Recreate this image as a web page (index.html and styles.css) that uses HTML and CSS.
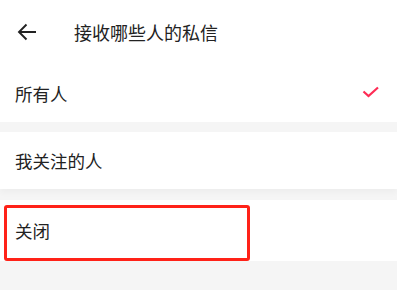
FILE: index.html
```html
<!DOCTYPE html>
<html lang="zh-CN">
<head>
    <meta charset="UTF-8">
    <meta name="viewport" content="width=device-width, initial-scale=1.0">
    <title>接收哪些人的私信</title>
    <link rel="stylesheet" href="styles.css">
</head>
<body>

<header class="topbar">
    <a href="#" class="back">
        <svg width="20" height="20" viewBox="0 0 20 20">
            <path d="M19 10H2M9.5 2.5L2 10l7.5 7.5" fill="none" stroke="#222" stroke-width="1.9"/>
        </svg>
    </a>
    <span class="title">接收哪些人的私信</span>
</header>

<div class="options">
    <div class="option first">
        <span>所有人</span>
        <svg class="check" width="18" height="12" viewBox="0 0 18 12">
            <path d="M1.5 5.5l5 4.5 9.5-8.5" fill="none" stroke="#fe2c55" stroke-width="2.2"/>
        </svg>
    </div>
    <div class="option second">
        <span>我关注的人</span>
    </div>
    <div class="option last">
        <span>关闭</span>
        <div class="highlight"></div>
    </div>
</div>

</body>
</html>
```

FILE: styles.css
```css
body {
    margin: 0;
    padding: 0;
    background-color: #f5f5f5;
    color: #222222;
    font-family: "Liberation Sans", "Noto Sans CJK SC", sans-serif;
    height: 290px;
    overflow: hidden;
}

.topbar {
    height: 64px;
    background-color: #ffffff;
    display: flex;
    align-items: center;
    padding-left: 17px;
}

.back {
    display: flex;
    margin-top: -1px;
}

.title {
    margin-left: 37px;
    font-size: 18px;
    margin-top: -1px;
}

.option {
    background-color: #ffffff;
    display: flex;
    align-items: center;
    justify-content: space-between;
    padding: 0 17px 0 15px;
    font-size: 17.5px;
    position: relative;
}

.option.first {
    height: 58px;
    margin-bottom: 10px;
}

.option.second {
    height: 57px;
    margin-bottom: 11px;
    box-shadow: 0 4px 6px rgba(0, 0, 0, 0.03);
}

.option.last {
    height: 61px;
}

.check {
    margin-top: -2px;
}

.highlight {
    position: absolute;
    left: 4px;
    top: 5px;
    width: 240px;
    height: 50px;
    border: 3px solid #ff2218;
    border-radius: 3px;
}
```
